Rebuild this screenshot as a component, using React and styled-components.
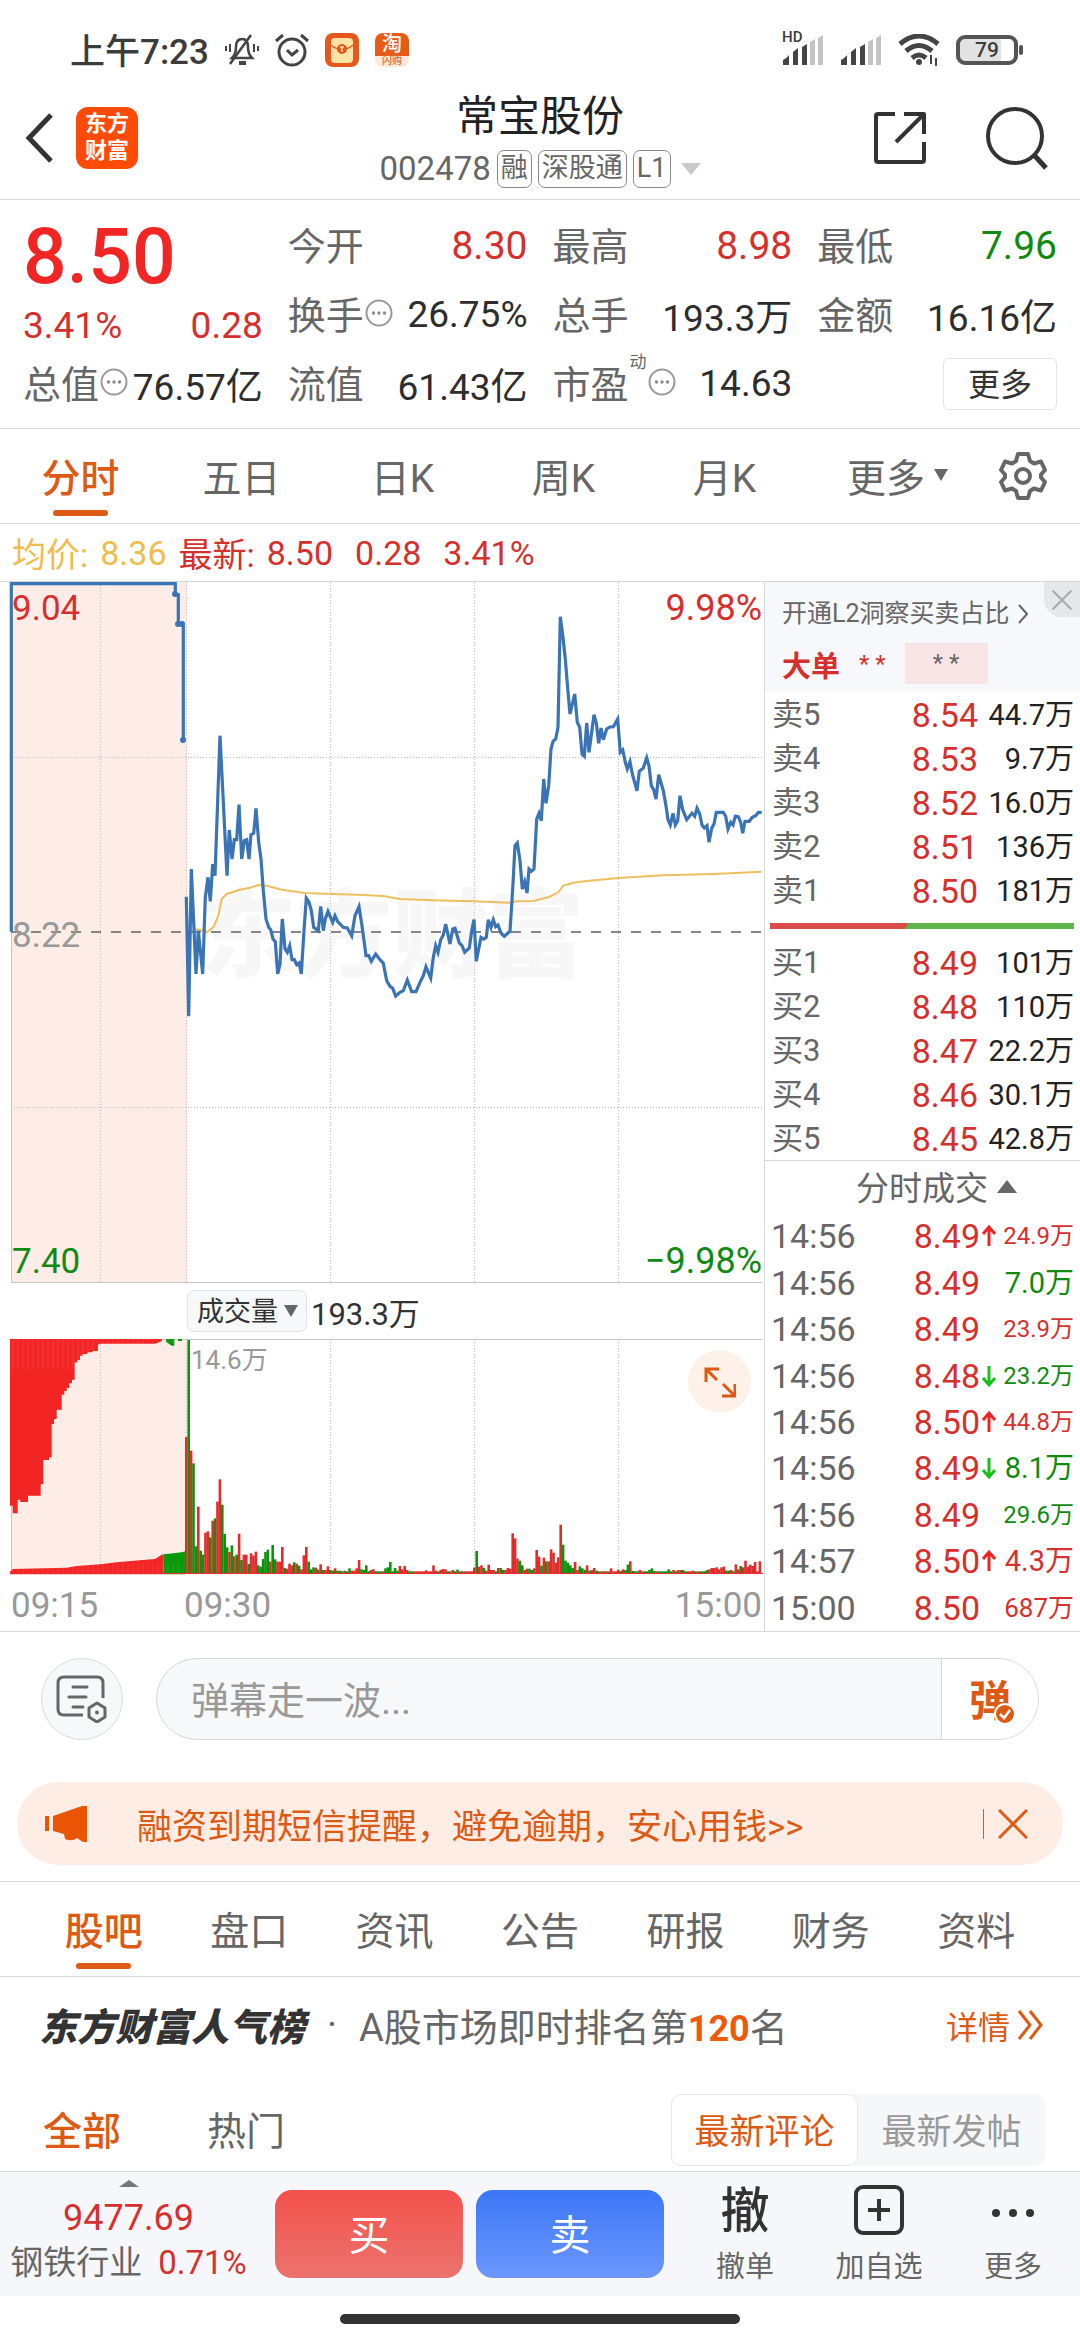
import React, { useState } from "react"
import styled, { createGlobalStyle, css } from "styled-components"

const GlobalStyle = createGlobalStyle`
  * {
    box-sizing: border-box;
  }

  body {
    margin: 0;
    background: #fff;
    color: #333;
    font-family: Roboto, "Noto Sans CJK SC", sans-serif;
  }

  button, input, select {
    margin: 0;
    padding: 0;
    border: 0;
    background: none;
    color: inherit;
    font: inherit;
  }

  a {
    color: inherit;
    text-decoration: none;
  }

  svg {
    display: block;
    flex: none;
  }
`

const RED = "#d5302d"
const GREEN = "#108a10"
const ORANGE = "#dd5a14"
const GRAY = "#666"
const LINE = "#d4d6da"

const tones = { red: RED, green: GREEN, dark: "#2d2d2d" }

/* ---------- data ---------- */

const periods = ["分时", "五日", "日K", "周K", "月K"]
const sections = ["股吧", "盘口", "资讯", "公告", "研报", "财务", "资料"]

const asks = [
  ["卖5", "8.54", "44.7万"],
  ["卖4", "8.53", "9.7万"],
  ["卖3", "8.52", "16.0万"],
  ["卖2", "8.51", "136万"],
  ["卖1", "8.50", "181万"],
]

const bids = [
  ["买1", "8.49", "101万"],
  ["买2", "8.48", "110万"],
  ["买3", "8.47", "22.2万"],
  ["买4", "8.46", "30.1万"],
  ["买5", "8.45", "42.8万"],
]

const trades = [
  { time: "14:56", price: "8.49", move: "up", volume: "24.9万", tone: "red", size: 24 },
  { time: "14:56", price: "8.49", volume: "7.0万", tone: "green", size: 29 },
  { time: "14:56", price: "8.49", volume: "23.9万", tone: "red", size: 24 },
  { time: "14:56", price: "8.48", move: "down", volume: "23.2万", tone: "green", size: 24 },
  { time: "14:56", price: "8.50", move: "up", volume: "44.8万", tone: "red", size: 24 },
  { time: "14:56", price: "8.49", move: "down", volume: "8.1万", tone: "green", size: 29 },
  { time: "14:56", price: "8.49", volume: "29.6万", tone: "green", size: 24 },
  { time: "14:57", price: "8.50", move: "up", volume: "4.3万", tone: "red", size: 29 },
  { time: "15:00", price: "8.50", volume: "687万", tone: "red", size: 26 },
]

// chart series are stored in thirds of a chart unit
const priceSeries =
  "559,944 566,1303 574,861 588,1176 595,1046 608,1176 616,946 624,886 631,958 638,846 645,881 660,461 681,881 688,744 696,831 703,773 710,773 717,668 725,831 733,776 740,773 747,831 753,758 761,754 768,679 776,781 783,831 790,926 798,1011 806,1036 812,1043 819,1071 826,1079 833,1176 840,1146 847,1011 855,1101 862,1111 869,1091 876,1133 883,1133 890,1148 897,1143 904,1176 912,1046 919,949 927,961 934,986 941,1036 955,1046 962,973 970,1046 976,1011 984,988 998,1021 1005,1001 1013,1019 1030,1036 1042,1038 1055,1061 1065,1001 1077,974 1086,1031 1098,1121 1106,1121 1114,1138 1127,1116 1140,1133 1150,1144 1160,1196 1170,1213 1178,1219 1187,1242 1200,1231 1210,1226 1222,1194 1235,1229 1248,1229 1260,1201 1270,1181 1278,1154 1292,1188 1300,1126 1307,1091 1314,1111 1322,1073 1330,1059 1337,1026 1350,1086 1358,1041 1365,1039 1378,1083 1386,1091 1394,1111 1408,1098 1415,1046 1422,1013 1429,1138 1443,1066 1451,1071 1459,1066 1465,1013 1473,1036 1480,1013 1487,1034 1494,1029 1503,1053 1513,1063 1530,1048 1538,921 1545,791 1552,783 1560,836 1567,921 1574,899 1581,933 1587,861 1594,868 1602,861 1610,711 1617,694 1624,716 1631,591 1638,664 1646,611 1653,501 1659,478 1667,471 1674,436 1681,104 1689,166 1696,231 1703,319 1710,396 1724,336 1732,421 1739,436 1746,516 1753,523 1760,423 1767,511 1782,398 1789,423 1796,484 1803,438 1810,473 1820,441 1830,435 1840,434 1853,411 1861,511 1868,504 1876,541 1882,561 1890,539 1897,576 1911,626 1918,568 1930,558 1940,527 1947,551 1954,611 1961,623 1968,651 1976,578 1990,626 1997,666 2004,713 2011,729 2019,694 2026,729 2033,716 2040,641 2048,683 2060,713 2076,694 2084,703 2091,679 2099,696 2106,729 2113,738 2121,731 2127,781 2135,739 2142,726 2149,691 2170,691 2177,703 2184,741 2192,721 2199,729 2206,703 2215,704 2222,721 2228,754 2235,718 2248,718 2257,706 2267,701 2275,691 2285,691"

const averageSeries =
  "580,1041 605,1044 620,1051 640,1036 655,1001 665,951 680,936 720,923 750,917 775,909 800,911 845,923 915,933 1000,936 1070,938 1150,942 1200,951 1300,955 1420,958 1530,962 1550,958 1600,957 1645,946 1675,931 1690,911 1720,902 1760,897 1855,888 1990,880 2140,876 2285,869"

const auctionSeries = "34,1049 34,5 526,5 526,38 535,38 535,128 550,128 550,474"

// one bar per minute, negative is a falling minute
const volumes = [
  411, -702, 370, -332, -83, 202, -70, -58, 124, 128, -110, 160, -167, 217, 284, -208,
  -120, -80, 66, -86, 53, -58, 121, -42, 58, 58, -30, 62, 55, 67, -26, -22, -45, -66,
  -73, 37, -87, -44, 37, 37, 81, -18, 16, 31, 26, -35, 31, -25, 14, 56, 81, -37, -14,
  -20, 19, -13, 29, -12, 12, 23, -12, -10, 17, -10, -10, -8, 10, -8, -17, 10, 10, 17,
  42, -14, -12, -26, -8, 12, 14, -8, -8, -8, 8, -17, -20, -36, -8, -18, -10, 24, 14, 24,
  12, -8, -8, 8, 8, 8, 8, 8, 11, 8, 8, 26, 10, -8, 12, 15, 14, -8, 8, 12, -8, -13, 8,
  -8, 8, 8, 8, 8, 19, -69, 22, 26, -18, 10, 28, 12, 12, -8, 18, -18, -12, 12, 18, 16,
  122, 107, 46, -40, -26, 12, 16, -16, -12, 17, 72, 52, -25, 49, -38, 38, 74, 64, 34,
  50, 148, -88, -40, -34, -26, -18, 36, 12, -23, -17, -12, 26, -10, 12, 18, -10, -8, 8,
  8, -8, 8, 17, 8, 8, 13, -9, 14, -12, -28, 38, -9, -8, -8, 12, 8, -8, -8, -12, -17, -9,
  8, -8, -8, -8, -8, -14, -8, 12, -8, 12, 12, -12, -8, 8, 8, 10, -8, 8, -8, -8, -8, -12,
  14, 18, 18, 20, 14, 20, 22, -10, -10, 12, -8, 29, 14, -24, 20, 40, 22, 28, 24, 36, 8,
  38,
]

/* ---------- icons ---------- */

const BackIcon = () => (
  <svg width="30" height="50" viewBox="0 0 30 50" fill="none" stroke="#333" strokeWidth="5">
    <path d="M27 2 L5 25 L27 48" />
  </svg>
)

const ShareIcon = () => (
  <svg width="52" height="54" viewBox="0 0 52 54" fill="none" stroke="#333" strokeWidth="4">
    <path d="M21 3H4q-2 0-2 2v44q0 2 2 2h44q2 0 2-2V31M30 3h20v20M50 3 22 31" strokeLinejoin="round" />
  </svg>
)

const SearchIcon = () => (
  <svg width="62" height="64" viewBox="0 0 62 64" fill="none" stroke="#333" strokeWidth="4">
    <circle cx="29" cy="30" r="27" />
    <path d="M48 49 60 62" strokeWidth="5" />
  </svg>
)

const GearIcon = () => (
  <svg width="48" height="48" viewBox="0 0 48 48" fill="none" stroke={GRAY} strokeWidth="4">
    <path
      strokeLinejoin="round"
      d="M19 2h10l2 7 4 2.500 7-2 4 8.500-4 4.500v3l4 4.500-4 8.500-7-2-4 2.500-2 7H19l-2-7-4-2.500-7 2-4-8.500 4-4.500v-3l-4-4.500 4-8.500 7 2 4-2.500z"
    />
    <circle cx="24" cy="24" r="7" />
  </svg>
)

const HintIcon = () => (
  <svg width="28" height="28" viewBox="0 0 28 28">
    <circle cx="14" cy="14" r="12.500" fill="none" stroke="#999" strokeWidth="2" />
    <circle cx="8.500" cy="14" r="1.700" fill="#888" />
    <circle cx="14" cy="14" r="1.700" fill="#888" />
    <circle cx="19.500" cy="14" r="1.700" fill="#888" />
  </svg>
)

const Triangle = ({ width, height, color, up }) => (
  <svg width={width} height={height} viewBox="0 0 20 12" preserveAspectRatio="none">
    <path d={up ? "M10 0 20 12H0z" : "M0 0H20L10 12z"} fill={color} />
  </svg>
)

const MuteIcon = () => (
  <svg width="34" height="34" viewBox="0 0 34 34" fill="none" stroke="#444" strokeWidth="2.500">
    <path d="M7 25h20c-3-3-4-6-4-11 0-5-2-8-6-8s-6 3-6 8c0 5-1 8-4 11z" />
    <path d="M5 31 26 2" />
    <path d="M14 30h7" strokeWidth="4" />
    <path d="M5 11v8M1 13v5M29 11v8M33 13v5" strokeWidth="2" />
  </svg>
)

const AlarmIcon = () => (
  <svg width="34" height="34" viewBox="0 0 34 34" fill="none" stroke="#444" strokeWidth="3">
    <circle cx="17" cy="19" r="13" />
    <path d="m12 17 5 5 6-5M1 8l7-6M33 8l-7-6" />
  </svg>
)

const PacketIcon = () => (
  <svg width="34" height="34" viewBox="0 0 34 34">
    <rect width="34" height="34" rx="8" fill="#e5571a" />
    <rect x="6" y="5" width="22" height="25" rx="4" fill="#fde3a6" />
    <path d="M6 12q11 9 22 0" fill="none" stroke="#e5571a" strokeWidth="1.500" />
    <circle cx="17" cy="16" r="5" fill="#e5571a" />
    <path d="M17 14v5M15 14h4" stroke="#fde3a6" strokeWidth="1.500" />
  </svg>
)

const SignalIcon = () => (
  <svg width="42" height="32" viewBox="0 0 42 32">
    <path d="M1 26q4-2 6-5v10H1zM11 18l5-4v17h-5zM20 13l5-3v21h-5z" fill="#444" />
    <path d="M28 8l5-3v26h-5zM36 4l5-3v30h-5z" fill="#c4c4c4" />
  </svg>
)

const WifiIcon = () => (
  <svg width="42" height="32" viewBox="0 0 42 32" fill="none" stroke="#444" strokeWidth="5">
    <path d="M2 10q19-16 38 0M8 17q13-11 26 0M14 24q7-6 14 0" />
    <circle cx="21" cy="28" r="3" fill="#444" stroke="none" />
    <path d="M33 21v9M38 24v8" strokeWidth="2" />
  </svg>
)

const NoteIcon = () => (
  <svg width="52" height="48" viewBox="0 0 52 48" fill="none" stroke={GRAY} strokeWidth="3">
    <path d="M47 23V8q0-6-6-6H8Q2 2 2 8v26q0 6 6 6h19" />
    <path d="M17 12h14M13 22h17M17 32h10" strokeLinecap="round" />
    <path d="M41 28l8 5v9l-8 5-8-5v-9z" strokeLinejoin="round" />
    <circle cx="41" cy="37.500" r="2" fill={GRAY} stroke="none" />
  </svg>
)

const CheckIcon = () => (
  <svg width="22" height="22" viewBox="0 0 22 22">
    <circle cx="11" cy="11" r="10" fill={ORANGE} stroke="#fff" strokeWidth="2" />
    <path d="m6 11 4 4 6-8" fill="none" stroke="#fff" strokeWidth="2.500" />
  </svg>
)

const HornIcon = () => (
  <svg width="42" height="38" viewBox="0 0 42 38" fill="#e95504">
    <path d="M0 11h4v15H0zM8 11 37 1h5v36h-4l-6-4q-5 4-12 1l-1-5-11-3z" />
  </svg>
)

const CloseIcon = ({ size, color, weight }) => (
  <svg width={size} height={size} viewBox="0 0 30 30" stroke={color} strokeWidth={weight}>
    <path d="M1 1 29 29M29 1 1 29" />
  </svg>
)

const ExpandIcon = () => (
  <svg width="32" height="32" viewBox="0 0 32 32" fill="none" stroke={ORANGE} strokeWidth="3">
    <path d="M15 3H2v13M2 3l11 11M31 18v12H18M31 30 19 18" />
  </svg>
)

const ArrowIcon = ({ down }) => (
  <svg width="16" height="24" viewBox="0 0 16 24" fill="none" strokeWidth="3" stroke={down ? "#16c016" : "#ee2424"}>
    <path d={down ? "M8 2v19M2 14l6 7 6-7" : "M8 22V3M2 10l6-7 6 7"} />
  </svg>
)

const ChevronIcon = () => (
  <svg width="10" height="20" viewBox="0 0 10 20" fill="none" stroke={GRAY} strokeWidth="2">
    <path d="M1 1 9 10 1 19" />
  </svg>
)

const DoubleChevronIcon = () => (
  <svg width="27" height="30" viewBox="0 0 27 30" fill="none" stroke={ORANGE} strokeWidth="3">
    <path d="M2 1 13 15 2 29M13 1 24 15 13 29" />
  </svg>
)

const AddIcon = () => (
  <svg width="50" height="50" viewBox="0 0 50 50" fill="none" stroke="#333" strokeWidth="4">
    <rect x="2" y="2" width="46" height="46" rx="7" />
    <path d="M25 14v22M14 25h22" />
  </svg>
)

const DotsIcon = () => (
  <svg width="44" height="50" viewBox="0 0 44 50" fill="#333">
    <circle cx="5" cy="28" r="4" />
    <circle cx="22" cy="28" r="4" />
    <circle cx="39" cy="28" r="4" />
  </svg>
)

/* ---------- top ---------- */

const StatusBar = styled.div`
  display: flex;
  align-items: center;
  justify-content: space-between;
  height: 92px;
  padding: 8px 57px 0 70px;
  color: #3c3c3c;
  font-size: 35px;
  font-weight: 500;
`

const StatusGroup = styled.div`
  display: flex;
  align-items: center;
  gap: 16px;
`

const Clock = styled.span`
  padding-bottom: 4px;
`

const Signal = styled.div`
  position: relative;

  span {
    position: absolute;
    top: -4px;
    left: 0;
    background: #fff;
    font-size: 15px;
    line-height: 14px;
  }
`

const TaobaoBadge = styled.div`
  width: 34px;
  height: 34px;
  border-radius: 8px;
  background: linear-gradient(#e85a18 68%, #fbe9df 68%);
  color: #fff;
  font-size: 20px;
  line-height: 23px;
  text-align: center;

  small {
    display: block;
    color: #e0662a;
    font-size: 10px;
    line-height: 10px;
  }
`

const Battery = styled.div`
  display: flex;
  align-items: center;

  span {
    width: 62px;
    height: 30px;
    border: 4px solid #555;
    border-radius: 9px;
    background: linear-gradient(90deg, #e2e2e2 75%, #fff 75%);
    font-size: 21px;
    line-height: 22px;
    text-align: center;
  }

  &::after {
    content: "";
    width: 4px;
    height: 10px;
    margin-left: 1px;
    border-radius: 2px;
    background: #555;
  }
`

const Header = styled.header`
  display: grid;
  grid-template-columns: 1fr auto 1fr;
  align-items: center;
  padding: 0 24px 11px;
  border-bottom: 1px solid ${LINE};
`

const HeaderSide = styled.div`
  display: flex;
  align-items: center;
  justify-content: ${({ $end }) => ($end ? "flex-end" : "flex-start")};
  gap: ${({ $end }) => ($end ? 60 : 22)}px;
  padding: 0 ${({ $end }) => ($end ? 8 : 0)}px 4px 0;
`

const BrandLogo = styled.div`
  width: 62px;
  height: 62px;
  padding-top: 3px;
  border-radius: 12px;
  background: #ff4a08;
  color: #fff;
  font-size: 22px;
  font-weight: 700;
  line-height: 27px;
  text-align: center;

  span {
    display: block;
  }
`

const StockTitle = styled.div`
  h1 {
    margin: 0 0 8px;
    color: #222;
    font-size: 42px;
    font-weight: 400;
    line-height: 50px;
    text-align: center;
  }
`

const StockCode = styled.div`
  display: flex;
  align-items: center;
  gap: 6px;
  color: ${GRAY};
  font-size: 33px;
  line-height: 38px;

  svg {
    margin-left: 4px;
  }
`

const Tag = styled.span`
  height: 38px;
  padding: 0 3px;
  border: 1px solid #888;
  border-radius: 7px;
  font-size: 27px;
  line-height: 34px;
`

/* ---------- quote ---------- */

const Quote = styled.section`
  display: grid;
  grid-template-columns: repeat(4, 1fr);
  grid-auto-rows: 69px;
  column-gap: 25px;
  padding: 11px 23px 10px;
  border-bottom: 1px solid ${LINE};
`

const LastPrice = styled.div`
  grid-row: span 2;
  color: ${RED};
  font-size: 37px;
  line-height: 46px;

  strong {
    display: block;
    color: #f22525;
    font-size: 77px;
    font-weight: 500;
    line-height: 92px;
  }

  div {
    display: flex;
    justify-content: space-between;
  }
`

const Stat = styled.div`
  display: flex;
  align-items: center;
  justify-content: space-between;
  color: ${({ $tone = "dark" }) => tones[$tone]};
  font-size: ${({ $tone }) => ($tone ? 39 : 37)}px;
  white-space: nowrap;
`

const StatLabel = styled.span`
  display: flex;
  align-items: center;
  gap: 1px;
  padding-bottom: 4px;
  color: ${GRAY};
  font-size: 38px;

  sup {
    align-self: flex-start;
    font-size: 17px;
    line-height: 17px;
  }
`

const MoreButton = styled.button`
  align-self: center;
  justify-self: end;
  width: 114px;
  height: 52px;
  padding-bottom: 4px;
  border: 1px solid #e3e4e7;
  border-radius: 6px;
  font-size: 32px;
`

/* ---------- tabs ---------- */

const TabBar = styled.nav`
  display: flex;
  align-items: stretch;
  height: 95px;
  padding: ${({ $inset = 0 }) => `0 ${$inset}px`};
  border-bottom: 1px solid ${LINE};
`

const Tab = styled.button`
  position: relative;
  display: flex;
  flex: 161;
  align-items: center;
  justify-content: center;
  gap: 9px;
  padding-bottom: 3px;
  color: ${({ $active }) => ($active ? ORANGE : GRAY)};
  font-size: 39px;
  font-weight: ${({ $active }) => ($active ? 500 : 400)};

  ${({ $active }) =>
    $active &&
    css`
      &::after {
        content: "";
        position: absolute;
        bottom: 7px;
        width: 55px;
        height: 6px;
        border-radius: 3px;
        background: ${ORANGE};
      }
    `}
`

const MoreTab = styled(Tab)`
  flex: 185;
`

const GearButton = styled.button`
  display: flex;
  flex: none;
  align-items: center;
  width: 90px;
  padding-left: 9px;
`

/* ---------- chart ---------- */

const Summary = styled.div`
  display: flex;
  align-items: center;
  gap: 12px;
  height: 58px;
  padding: 0 12px;
  border-bottom: 1px solid ${LINE};
  color: ${RED};
  font-size: 34px;
`

const AverageNote = styled.span`
  display: flex;
  align-items: center;
  gap: 12px;
  color: #efbc4e;
`

const Figures = styled.span`
  display: flex;
  gap: 22px;
`

const Board = styled.section`
  display: grid;
  grid-template-columns: minmax(0, 1fr) 316px;
  border-bottom: 1px solid ${LINE};
`

const Plot = styled.svg`
  width: 100%;
  height: auto;
`

const VolumeBar = styled.div`
  display: flex;
  align-items: center;
  gap: 4px;
  height: 56px;
  padding-left: 187px;
  font-size: 31px;
`

const IndicatorPicker = styled.label`
  display: flex;
  align-items: center;
  width: 120px;
  height: 42px;
  padding: 0 8px 0 9px;
  border: 1px solid #e1e3e8;
  border-radius: 7px;
  background: #f7f8fa;

  select {
    flex: 1;
    width: 84px;
    height: 40px;
    padding-top: 2px;
    appearance: none;
    font-size: 27px;
    line-height: 38px;
  }
`

const VolumePane = styled.div`
  position: relative;
`

const ExpandButton = styled.button`
  position: absolute;
  top: 11px;
  right: 13px;
  display: grid;
  place-items: center;
  width: 63px;
  height: 63px;
  border-radius: 50%;
  background: #fef1ea;
`

const thirds = (series, dy = 0) =>
  series
    .split(" ")
    .map(point => {
      const [x, y] = point.split(",")
      return `${(x / 3).toFixed(1)},${((y - dy) / 3).toFixed(1)}`
    })
    .join(" ")

const Guides = ({ bottom }) => (
  <g stroke="#bdbdbd" strokeDasharray="1 2">
    {[100, 186, 330, 474, 618].map(x => (
      <path key={x} d={`M${x}.5 0V${bottom}`} />
    ))}
  </g>
)

const PriceChart = () => (
  <Plot viewBox="0 0 764 701" role="img" aria-label="分时走势">
    <rect x="12" y="0" width="175" height="700" fill="#fdede6" />
    <text x="200" y="387" fontSize="96" fontWeight="900" fill="#f7f7f8">
      东方财富
    </text>
    <Guides bottom={700} />
    <path d="M14 175.500H762M14 525.500H762" stroke="#bdbdbd" strokeDasharray="1 2" />
    <path d="M11.500 0V700.500H762" fill="none" stroke="#c4c4c4" />
    <path d="M11 350H762" stroke="#858585" strokeWidth="2" strokeDasharray="10 10" />
    <polyline points={thirds(averageSeries)} fill="none" stroke="#edbf5f" strokeWidth="2" />
    <g fill="none" stroke="#3a74b5" strokeWidth="3.200">
      <polyline points={thirds(auctionSeries)} />
      <polyline points={thirds(priceSeries)} />
    </g>
    <g fill="#3a74b5">
      <circle cx="175" cy="12" r="3" />
      <circle cx="178" cy="42" r="3" />
      <circle cx="182" cy="42" r="3" />
      <circle cx="183" cy="158" r="3" />
    </g>
    <g fontSize="35">
      <text x="12" y="38" fill={RED}>9.04</text>
      <text x="12" y="365" fill="#999">8.22</text>
      <text x="12" y="691" fill={GREEN}>7.40</text>
    </g>
    <g fontSize="36" textAnchor="end">
      <text x="762" y="38" fill={RED}>9.98%</text>
      <text x="762" y="691" fill={GREEN}>−9.98%</text>
    </g>
  </Plot>
)

const VolumeChart = () => (
  <Plot viewBox="0 0 764 292" role="img" aria-label="成交量">
    <rect x="12" y="0" width="175" height="235" fill="#fdede6" />
    <Guides bottom={234} />
    <path d="M11.500 0V234M11 .5H762" fill="none" stroke="#c4c4c4" />
    <g fill="#f32424">
      <polygon
        points={thirds(
          "30,330 30,830 38,830 38,853 53,853 53,812 61,812 61,819 84,819 84,800 122,800 122,765 130,765 130,693 147,693 147,685 155,685 155,585 162,585 162,570 170,570 170,542 185,542 185,497 193,497 193,486 200,486 200,477 208,477 208,463 216,463 216,452 224,452 224,400 232,400 232,393 240,393 240,380 248,380 248,375 262,375 262,370 278,370 278,366 294,366 294,347 302,344 465,344 485,337 485,330",
          330
        )}
      />
      <polygon
        points={thirds(
          "30,1036 30,1028 38,1020 130,1018 200,1016 230,1011 300,1006 350,1000 420,994 465,990 475,984 485,977 491,976 491,1036",
          330
        )}
      />
    </g>
    <g fill="#0a990a">
      <polygon points={thirds("491,1036 491,976 520,973 545,970 556,967 556,1036", 330)} />
      <polygon points={thirds("498,330 498,338 506,344 515,350 523,350 523,330", 330)} />
      <rect x="178" y="0" width="4" height="2" />
    </g>
    <g stroke="#fff" strokeOpacity="0.12">
      {Array.from({ length: 34 }, (_, i) => (
        <path key={i} d={`M${13 + i * 5} 0V${i < 19 ? 30 : 5}M${13 + i * 5} 224V234`} />
      ))}
    </g>
    {volumes.map((v, i) => (
      <rect
        key={i}
        x={185 + i * 2.4}
        y={(705 - Math.abs(v)) / 3}
        width="2.600"
        height={Math.abs(v) / 3}
        fill={v < 0 ? "#0c930c" : "#e02c2a"}
      />
    ))}
    <path d="M10 234.500H763" stroke="#ee2a2a" />
    <text x="191" y="30" fontSize="26" fill="#999">14.6万</text>
    <g fontSize="35" fill="#999">
      <text x="11" y="278">09:15</text>
      <text x="184" y="278">09:30</text>
      <text x="762" y="278" textAnchor="end">15:00</text>
    </g>
  </Plot>
)

/* ---------- order book ---------- */

const Depth = styled.aside`
  display: flex;
  flex-direction: column;
  border-left: 1px solid ${LINE};
`

const Promo = styled.div`
  position: relative;
  height: 110px;
  padding: 15px 0 0 17px;
  background: #f7f8fb;
`

const PromoLink = styled.a`
  display: flex;
  align-items: center;
  gap: 8px;
  color: ${GRAY};
  font-size: 25px;
  line-height: 34px;
`

const BigOrders = styled.div`
  display: flex;
  align-items: center;
  gap: 19px;
  height: 41px;
  margin-top: 12px;
  color: ${RED};
  font-size: 24px;

  strong {
    font-size: 29px;
  }

  em {
    width: 83px;
    height: 41px;
    background: #f8e4e5;
    color: ${GRAY};
    font-style: normal;
    line-height: 41px;
    text-align: center;
  }
`

const PromoClose = styled.button`
  position: absolute;
  top: 0;
  right: 0;
  display: grid;
  place-items: center;
  width: 36px;
  height: 35px;
  border-radius: 0 0 0 18px;
  background: #e6e7ea;
`

const BookTable = styled.table`
  width: 100%;
  border-collapse: collapse;
  table-layout: fixed;

  td {
    height: 44px;
    padding: 2px 0 0;
    line-height: 38px;
    text-align: right;
    white-space: nowrap;
  }

  td:first-child {
    width: 90px;
    padding-left: 7px;
    color: ${GRAY};
    font-size: 31px;
    text-align: left;
  }

  td:nth-child(2) {
    color: ${RED};
    font-size: 34px;
  }

  td:last-child {
    width: 102px;
    padding-right: 6px;
    color: #222;
    font-size: 29px;
  }
`

const Ratio = styled.div`
  height: 6px;
  margin: 11px 6px 11px 5px;
  background: linear-gradient(120deg, #da4b49 45%, #5fb54b 45%);
`

const TradesTitle = styled.button`
  display: flex;
  align-items: center;
  justify-content: center;
  gap: 9px;
  height: 53px;
  padding-bottom: 2px;
  padding-left: 28px;
  border-top: 1px solid ${LINE};
  color: ${GRAY};
  font-size: 33px;
`

const TradeTable = styled.table`
  flex: 1;
  width: 100%;
  border-collapse: collapse;
  table-layout: fixed;

  td {
    padding: 0;
    color: ${RED};
    font-size: 34px;
    line-height: 38px;
    text-align: right;
    white-space: nowrap;
  }

  td:first-child {
    width: 100px;
    padding-left: 6px;
    color: ${GRAY};
    text-align: left;
  }

  td:nth-child(3) {
    width: 18px;
    padding-left: 1px;
  }
`

const TradeVolume = styled.td`
  && {
    width: 82px;
    padding-right: 6px;
    color: ${({ $tone }) => tones[$tone]};
    font-size: ${({ $size }) => $size}px;
  }
`

const Book = ({ rows, label }) => (
  <BookTable aria-label={label}>
    <tbody>
      {rows.map(([name, price, volume]) => (
        <tr key={name}>
          <td>{name}</td>
          <td>{price}</td>
          <td>{volume}</td>
        </tr>
      ))}
    </tbody>
  </BookTable>
)

/* ---------- comments ---------- */

const ChatRow = styled.div`
  display: flex;
  gap: 33px;
  padding: 26px 41px 42px;
`

const RoundButton = styled.button`
  display: grid;
  place-items: center;
  width: 82px;
  height: 82px;
  border: 1px solid #d9dbe0;
  border-radius: 50%;
  background: #f7f8fa;
`

const ChatBox = styled.div`
  display: flex;
  flex: 1;
  height: 82px;
  overflow: hidden;
  border: 1px solid #d3d6da;
  border-radius: 41px;
  background: #f7f8fa;

  input {
    flex: 1;
    min-width: 0;
    padding: 3px 0 0 34px;
    font-size: 38px;
    outline: 0;
  }

  input::placeholder {
    color: #999;
    opacity: 1;
  }
`

const DanmuButton = styled.button`
  position: relative;
  width: 97px;
  padding-bottom: 4px;
  border-left: 1px solid #d3d6da;
  background: #fff;
  color: ${ORANGE};
  font-size: 42px;
  font-weight: 700;

  svg {
    position: absolute;
    right: 22px;
    bottom: 14px;
  }
`

const Banner = styled.div`
  display: flex;
  align-items: center;
  height: 83px;
  margin: 0 17px 16px;
  padding: 0 35px 0 28px;
  border-radius: 42px;
  background: #fdede4;
  color: ${ORANGE};
  font-size: 35px;

  a {
    flex: 1;
    padding-left: 50px;
  }

  button {
    padding-left: 14px;
    border-left: 1px solid ${ORANGE};
  }
`

const Divider = styled.div`
  height: 1px;
  background: ${LINE};
`

const Rank = styled.div`
  display: flex;
  align-items: center;
  height: 100px;
  padding: 0 36px 5px 39px;
  color: ${GRAY};
  font-size: 38px;

  b {
    color: #333;
    font-style: italic;
    font-weight: 900;
  }

  i {
    width: 54px;
    font-style: normal;
    text-align: center;
  }

  p {
    margin: 0;
  }

  strong {
    color: #ee5a0c;
    font-size: 36px;
  }

  a {
    display: flex;
    align-items: center;
    gap: 7px;
    margin-left: auto;
    color: ${ORANGE};
    font-size: 32px;
  }
`

const Filters = styled.div`
  display: flex;
  align-items: center;
  gap: 86px;
  height: 95px;
  padding: 12px 35px 0 43px;
  border-bottom: 1px solid ${LINE};
`

const FilterButton = styled.button`
  padding-bottom: 4px;
  color: ${({ $active }) => ($active ? ORANGE : GRAY)};
  font-size: 39px;
  font-weight: ${({ $active }) => ($active ? 500 : 400)};
`

const Segments = styled.div`
  display: flex;
  margin-left: auto;
  border-radius: 10px;
  background: #f6f7f9;
`

const Segment = styled.button`
  width: 187px;
  height: 72px;
  padding-bottom: 4px;
  border: 1px solid ${({ $active }) => ($active ? "#e6e7ea" : "transparent")};
  border-radius: 10px;
  background: ${({ $active }) => ($active ? "#fff" : "transparent")};
  color: ${({ $active }) => ($active ? ORANGE : "#999")};
  font-size: 35px;
`

/* ---------- bottom ---------- */

const Footer = styled.footer`
  display: flex;
  align-items: center;
  height: 124px;
  background: #f6f7fa;
`

const IndexBox = styled.button`
  display: flex;
  flex: none;
  flex-direction: column;
  align-items: center;
  width: 257px;
  height: 124px;
  padding: 8px 4px 0;
  color: ${RED};
  font-size: 36px;
  line-height: 46px;

  svg {
    margin-bottom: 8px;
  }

  div {
    display: flex;
    gap: 16px;
    font-size: 33px;
    line-height: 44px;
  }

  span {
    color: ${GRAY};
  }
`

const OrderButtons = styled.div`
  display: flex;
  flex: 1;
  gap: 13px;
  padding: 0 14px 0 18px;
`

const OrderButton = styled.button`
  flex: 1;
  height: 88px;
  padding-bottom: 4px;
  border-radius: 17px;
  background: ${({ $side }) =>
    $side === "buy" ? "linear-gradient(#f4514b, #eb736e)" : "linear-gradient(#3c76f6, #6c98fd)"};
  color: #fff;
  font-size: 41px;
`

const Action = styled.button`
  display: flex;
  flex-direction: column;
  align-items: center;
  gap: 12px;
  width: 134px;
  padding-top: 4px;
  color: ${GRAY};
  font-size: 29px;
  line-height: 40px;

  b {
    height: 50px;
    color: #333;
    font-size: 49px;
    font-weight: 500;
    line-height: 54px;
  }
`

const HomeBar = styled.div`
  display: flex;
  justify-content: center;
  padding: 18px 0 16px;

  &::after {
    content: "";
    width: 37%;
    height: 10px;
    border-radius: 5px;
    background: #333;
  }
`

const App = () => {
  const [period, setPeriod] = useState("分时")
  const [section, setSection] = useState("股吧")
  const [filter, setFilter] = useState("全部")
  const [sort, setSort] = useState("最新评论")

  return (
    <>
      <GlobalStyle />
      <StatusBar>
        <StatusGroup>
          <Clock>上午7:23</Clock>
          <MuteIcon />
          <AlarmIcon />
          <PacketIcon />
          <TaobaoBadge>
            淘<small>闪购</small>
          </TaobaoBadge>
        </StatusGroup>
        <StatusGroup>
          <Signal>
            <SignalIcon />
            <span>HD</span>
          </Signal>
          <SignalIcon />
          <WifiIcon />
          <Battery>
            <span>79</span>
          </Battery>
        </StatusGroup>
      </StatusBar>

      <Header>
        <HeaderSide>
          <button aria-label="返回">
            <BackIcon />
          </button>
          <BrandLogo>
            <span>东方</span>
            <span>财富</span>
          </BrandLogo>
        </HeaderSide>
        <StockTitle>
          <h1>常宝股份</h1>
          <StockCode>
            002478
            <Tag>融</Tag>
            <Tag>深股通</Tag>
            <Tag>L1</Tag>
            <Triangle width={20} height={12} color="#c8c8c8" />
          </StockCode>
        </StockTitle>
        <HeaderSide $end>
          <button aria-label="分享">
            <ShareIcon />
          </button>
          <button aria-label="搜索">
            <SearchIcon />
          </button>
        </HeaderSide>
      </Header>

      <Quote>
        <LastPrice>
          <strong>8.50</strong>
          <div>
            <span>3.41%</span>
            <span>0.28</span>
          </div>
        </LastPrice>
        <Stat $tone="red">
          <StatLabel>今开</StatLabel>8.30
        </Stat>
        <Stat $tone="red">
          <StatLabel>最高</StatLabel>8.98
        </Stat>
        <Stat $tone="green">
          <StatLabel>最低</StatLabel>7.96
        </Stat>
        <Stat>
          <StatLabel>
            换手
            <HintIcon />
          </StatLabel>
          26.75%
        </Stat>
        <Stat>
          <StatLabel>总手</StatLabel>193.3万
        </Stat>
        <Stat>
          <StatLabel>金额</StatLabel>16.16亿
        </Stat>
        <Stat>
          <StatLabel>
            总值
            <HintIcon />
          </StatLabel>
          76.57亿
        </Stat>
        <Stat>
          <StatLabel>流值</StatLabel>61.43亿
        </Stat>
        <Stat>
          <StatLabel>
            市盈
            <sup>动</sup>
            <HintIcon />
          </StatLabel>
          14.63
        </Stat>
        <MoreButton>更多</MoreButton>
      </Quote>

      <TabBar>
        {periods.map(name => (
          <Tab key={name} $active={name === period} onClick={() => setPeriod(name)}>
            {name}
          </Tab>
        ))}
        <MoreTab>
          更多
          <Triangle width={14} height={12} color={GRAY} />
        </MoreTab>
        <GearButton aria-label="设置">
          <GearIcon />
        </GearButton>
      </TabBar>

      <Summary>
        <AverageNote>
          <span>均价:</span>
          <span>8.36</span>
        </AverageNote>
        <span>最新:</span>
        <Figures>
          <span>8.50</span>
          <span>0.28</span>
          <span>3.41%</span>
        </Figures>
      </Summary>

      <Board>
        <div>
          <PriceChart />
          <VolumeBar>
            <IndicatorPicker>
              <select aria-label="指标" defaultValue="成交量">
                <option>成交量</option>
                <option>成交额</option>
              </select>
              <Triangle width={14} height={12} color={GRAY} />
            </IndicatorPicker>
            193.3万
          </VolumeBar>
          <VolumePane>
            <VolumeChart />
            <ExpandButton aria-label="全屏">
              <ExpandIcon />
            </ExpandButton>
          </VolumePane>
        </div>
        <Depth>
          <Promo>
            <PromoLink href="#l2">
              开通L2洞察买卖占比
              <ChevronIcon />
            </PromoLink>
            <BigOrders>
              <strong>大单</strong>
              <span>* *</span>
              <em>* *</em>
            </BigOrders>
            <PromoClose aria-label="关闭">
              <CloseIcon size={20} color="#aaa" weight={3} />
            </PromoClose>
          </Promo>
          <Book rows={asks} label="卖盘" />
          <Ratio />
          <Book rows={bids} label="买盘" />
          <TradesTitle>
            分时成交
            <Triangle width={20} height={13} color={GRAY} up />
          </TradesTitle>
          <TradeTable>
            <tbody>
              {trades.map((trade, i) => (
                <tr key={i}>
                  <td>{trade.time}</td>
                  <td>{trade.price}</td>
                  <td>{trade.move && <ArrowIcon down={trade.move === "down"} />}</td>
                  <TradeVolume $tone={trade.tone} $size={trade.size}>
                    {trade.volume}
                  </TradeVolume>
                </tr>
              ))}
            </tbody>
          </TradeTable>
        </Depth>
      </Board>

      <ChatRow>
        <RoundButton aria-label="弹幕设置">
          <NoteIcon />
        </RoundButton>
        <ChatBox>
          <input aria-label="弹幕" placeholder="弹幕走一波..." />
          <DanmuButton>
            弹
            <CheckIcon />
          </DanmuButton>
        </ChatBox>
      </ChatRow>
      <Banner>
        <HornIcon />
        <a href="#remind">融资到期短信提醒，避免逾期，安心用钱&gt;&gt;</a>
        <button aria-label="关闭提醒">
          <CloseIcon size={30} color={ORANGE} weight={3} />
        </button>
      </Banner>

      <Divider />
      <TabBar $inset={31}>
        {sections.map(name => (
          <Tab key={name} $active={name === section} onClick={() => setSection(name)}>
            {name}
          </Tab>
        ))}
      </TabBar>
      <Rank>
        <b>东方财富人气榜</b>
        <i>·</i>
        <p>
          A股市场即时排名第<strong>120</strong>名
        </p>
        <a href="#rank">
          详情
          <DoubleChevronIcon />
        </a>
      </Rank>
      <Filters>
        {["全部", "热门"].map(name => (
          <FilterButton key={name} $active={name === filter} onClick={() => setFilter(name)}>
            {name}
          </FilterButton>
        ))}
        <Segments>
          {["最新评论", "最新发帖"].map(name => (
            <Segment key={name} $active={name === sort} onClick={() => setSort(name)}>
              {name}
            </Segment>
          ))}
        </Segments>
      </Filters>

      <Footer>
        <IndexBox>
          <Triangle width={20} height={7} color="#777" up />
          9477.69
          <div>
            <span>钢铁行业</span>
            0.71%
          </div>
        </IndexBox>
        <OrderButtons>
          <OrderButton $side="buy">买</OrderButton>
          <OrderButton $side="sell">卖</OrderButton>
        </OrderButtons>
        <Action>
          <b>撤</b>
          撤单
        </Action>
        <Action>
          <AddIcon />
          加自选
        </Action>
        <Action>
          <DotsIcon />
          更多
        </Action>
      </Footer>
      <HomeBar />
    </>
  )
}

export default App
